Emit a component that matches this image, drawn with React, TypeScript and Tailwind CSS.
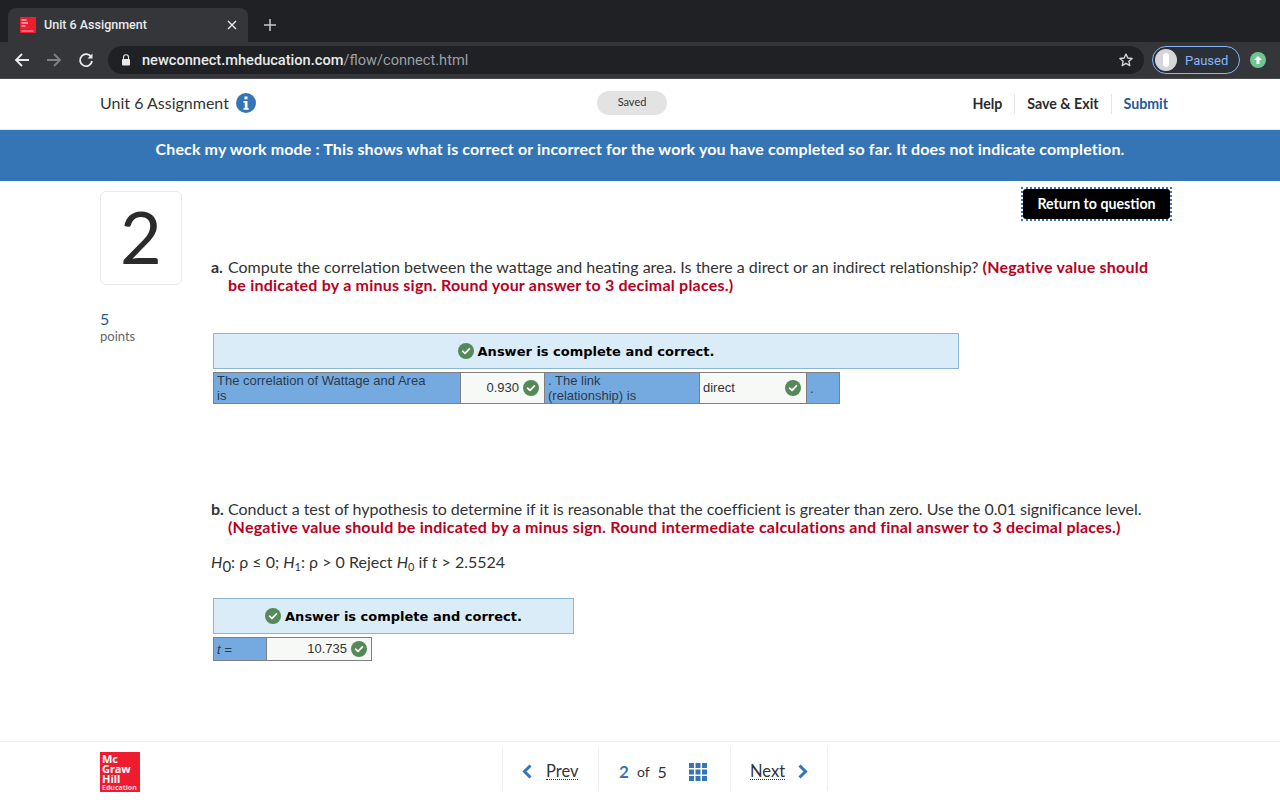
import React from "react";

const Check = ({ size = 16 }: { size?: number }) => (
  <svg width={size} height={size} viewBox="0 0 16 16" className="shrink-0">
    <circle cx="8" cy="8" r="8" fill="#55895a" />
    <path d="M4.6 8.2 7 10.4 11.4 5.9" fill="none" stroke="#fff" strokeWidth="1.7" strokeLinecap="round" strokeLinejoin="round" />
  </svg>
);

const Banner = ({ w }: { w: string }) => (
  <div className={`${w} h-9 bg-[#d9ecf8] border border-[#8db4d9] flex items-center justify-center gap-[4px] font-['DejaVu_Sans',sans-serif] font-bold text-[13px] text-black`}>
    <Check />
    <span className="pt-px">Answer is complete and correct.</span>
  </div>
);

const Blue = ({ w, children }: { w: string; children: React.ReactNode }) => (
  <div className={`${w} bg-[#75aae0] px-[3px] text-[13px] leading-[15px] text-[#2c3a4a] flex flex-col justify-center shrink-0`}>{children}</div>
);

export default function App() {
  return (
    <div className="w-[1280px] h-[800px] overflow-hidden flex flex-col bg-white font-['Lato',sans-serif] text-[#333]">
      {/* tab strip */}
      <div className="h-[42px] bg-[#202124] flex items-end pl-2 shrink-0">
        <div className="w-[240px] h-[34px] bg-[#35363a] rounded-t-lg flex items-center pl-3 pr-[10px] text-[#e8eaed]">
          <svg width="16" height="16" viewBox="0 0 16 16" className="mr-2 shrink-0">
            <rect width="16" height="16" fill="#ee1c2e" />
            <path d="M1.500 3h5M1.500 6h6.500M1.500 9h4" stroke="#fff" strokeWidth="1.200" />
            <path d="M1.500 14h12" stroke="#f8b8bf" strokeWidth="1" />
          </svg>
          <span className="flex-1 font-['Roboto',sans-serif] text-[12.5px] font-medium">Unit 6 Assignment</span>
          <svg width="10" height="10" viewBox="0 0 10 10" className="mr-[1px]"><path d="M1 1l8 8M9 1l-8 8" stroke="#e8eaed" strokeWidth="1.4" /></svg>
        </div>
        <svg width="14" height="14" viewBox="0 0 14 14" className="ml-[15px] mb-[10px]"><path d="M7 1v12M1 7h12" stroke="#c4c7cb" strokeWidth="1.5" /></svg>
      </div>
      {/* toolbar */}
      <div className="h-[37px] bg-[#35363a] flex items-center shrink-0 border-b border-[#4a4b4f]">
        <svg width="16" height="16" viewBox="0 0 16 16" className="ml-[14px]"><path d="M15 8H2M8 2 2 8l6 6" fill="none" stroke="#e8eaed" strokeWidth="1.8" /></svg>
        <svg width="16" height="16" viewBox="0 0 16 16" className="ml-[16px]"><path d="M1 8h13M8 2l6 6-6 6" fill="none" stroke="#7f8184" strokeWidth="1.8" /></svg>
        <svg width="16" height="16" viewBox="0 0 16 16" className="ml-[16px]"><path d="M13.300 5.200A6 6 0 1 0 14 9" fill="none" stroke="#e8eaed" strokeWidth="1.800" /><path d="M14.500 1.500v5h-5z" fill="#e8eaed" /></svg>
        <div className="ml-[14px] w-[1036px] h-7 rounded-full bg-[#202124] flex items-center pl-[13px] pr-[10px] text-[14.6px] font-['Roboto',sans-serif]">
          <svg width="10" height="12" viewBox="0 0 10 12" className="mr-[11px]"><path d="M2.500 5V3.300a2.500 2.500 0 0 1 5 0V5" fill="none" stroke="#e8eaed" strokeWidth="1.100" /><rect x="1" y="5" width="8" height="6.500" rx="1" fill="#e8eaed" /></svg>
          <span className="text-[#e8eaed] font-medium pt-px">newconnect.mheducation.com</span>
          <span className="text-[#9aa0a6] pt-px">/flow/connect.html</span>
          <svg width="16" height="16" viewBox="0 0 24 24" className="ml-auto"><path d="M12 3l2.700 6 6.500.7-4.900 4.300 1.400 6.400-5.700-3.300-5.700 3.300L7.700 14 2.800 9.700l6.500-.7z" fill="none" stroke="#d5d7da" strokeWidth="2" strokeLinejoin="round" /></svg>
        </div>
        <div className="ml-[8px] w-[88px] h-7 rounded-full border border-[#8ab4f8] bg-[#2b3037] flex items-center pl-[2px] text-[13px] text-[#8ab4f8] font-['Roboto',sans-serif]">
          <div className="w-[22px] h-[22px] rounded-full bg-[#d5d6d8] flex items-center justify-center"><div className="w-[6px] h-[14px] rounded-full bg-white" /></div>
          <span className="ml-2 pt-px">Paused</span>
        </div>
        <div className="ml-[10px] w-4 h-4 rounded-full bg-[#6fc58f] flex items-center justify-center">
          <svg width="10" height="10" viewBox="0 0 10 10"><path d="M5 1 9 5H6.500v4h-3V5H1z" fill="#fff" /></svg>
        </div>
      </div>
      {/* header */}
      <div className="h-[51px] flex items-center pl-[100px] pr-[112px] pb-[2px] shrink-0 border-b border-[#e8e8e8]">
        <div className="w-[497px] -mt-px flex items-center gap-[7px] text-[16px] text-[#333]">
          <span>Unit 6 Assignment</span>
          <svg width="20" height="20" viewBox="0 0 20 20"><circle cx="10" cy="10" r="10" fill="#3575b5" /><rect x="8.500" y="3.500" width="3" height="2.800" fill="#fff" /><path d="M7.500 8h4v7h1.200v1.700H7.500V15h1.300v-5.300H7.500z" fill="#fff" /></svg>
        </div>
        <div className="w-[70px] h-6 -mt-px rounded-full bg-[#e3e3e3] flex items-center justify-center text-[11px] text-[#333]">Saved</div>
        <div className="flex-1 mt-px flex justify-end items-center text-[14.2px] font-bold">
          <span className="pr-3 border-r border-[#e6e6e6] leading-5 text-[#2b2b2b]">Help</span>
          <span className="px-3 border-r border-[#e6e6e6] leading-5 text-[#2b2b2b]">Save &amp; Exit</span>
          <span className="pl-3 leading-5 text-[#1f5a96]">Submit</span>
        </div>
      </div>
      {/* mode banner */}
      <div className="h-[51px] bg-[#3575b5] flex justify-center pt-[7px] text-white font-bold text-[16px] tracking-[0.13px] shrink-0">
        Check my work mode : This shows what is correct or incorrect for the work you have completed so far. It does not indicate completion.
      </div>
      {/* main */}
      <div className="flex-1 flex pl-[100px] pr-[108px] pt-[10px] min-h-0">
        <div className="w-[111px] shrink-0">
          <div className="w-[82px] h-[94px] border border-[#eaeaea] rounded-md flex items-center justify-center pb-[4px] text-[72px] leading-none text-[#2b2b2b]">2</div>
          <div className="mt-[24px] text-[16px] leading-[20px] text-[#1f5a96]">5</div>
          <div className="text-[13px] leading-[15px] text-[#666]">points</div>
        </div>
        <div className="flex-1 text-[16px] leading-[18px]">
          <div className="flex justify-end">
            <div className="-mt-[4px] border-2 border-dotted border-[#3575b5]">
              <div className="w-[147px] h-[30px] bg-black rounded-[3px] text-white font-bold text-[14.2px] flex items-center justify-center">Return to question</div>
            </div>
          </div>
          <p className="mt-[37px] pl-[17px]">
            <b className="inline-block w-[17px] -ml-[17px]">a.</b>Compute the correlation between the wattage and heating area. Is there a direct or an indirect relationship? <b className="text-[#b8001f] tracking-[0.22px]">(Negative value should<br />be indicated by a minus sign. Round your answer to 3 decimal places.)</b>
          </p>
          <div className="mt-[39px] ml-[2px]">
            <Banner w="w-[746px]" />
            <div className="mt-[3px] w-[627px] h-[32px] flex border border-[#7f7f7f] font-['Liberation_Sans',sans-serif]">
              <Blue w="w-[246px]"><span>The correlation of Wattage and Area</span><span>is</span></Blue>
              <div className="w-[85px] shrink-0 border-x border-[#7f7f7f] bg-[#f7f9f6] flex items-center justify-end gap-[4px] pr-[5px] text-[13px] text-[#333]">0.930<Check /></div>
              <Blue w="w-[154px]"><span>. The link</span><span>(relationship) is</span></Blue>
              <div className="w-[108px] shrink-0 border-x border-[#7f7f7f] bg-[#f7f9f6] flex items-center justify-between pl-[3px] pr-[5px] text-[13px] text-[#333]">direct<Check /></div>
              <Blue w="flex-1"><span>.</span></Blue>
            </div>
          </div>
          <p className="mt-[96px] pl-[17px] tracking-[-0.03px]">
            <b className="inline-block w-[17px] -ml-[17px]">b.</b>Conduct a test of hypothesis to determine if it is reasonable that the coefficient is greater than zero. Use the 0.01 significance level. <b className="text-[#b8001f] tracking-[0.21px]">(Negative value should be indicated by a minus sign. Round intermediate calculations and final answer to 3 decimal places.)</b>
          </p>
          <p className="mt-[17px] h-[18px]">
            <i>H</i><sub className="text-[15px]">0</sub>: ρ ≤ 0; <i>H</i><sub className="text-[11px]">1</sub>: ρ &gt; 0 Reject <i>H</i><sub className="text-[11px]">0</sub> if <i>t</i> &gt; 2.5524
          </p>
          <div className="mt-[27px] ml-[2px]">
            <Banner w="w-[361px]" />
            <div className="mt-[3px] w-[159px] h-[24px] flex border border-[#7f7f7f] font-['Liberation_Sans',sans-serif]">
              <Blue w="w-[52px]"><i>t =</i></Blue>
              <div className="flex-1 border-l border-[#7f7f7f] bg-[#f7f9f6] flex items-center justify-end gap-[4px] pr-[4px] text-[13px] text-[#333]">10.735<Check /></div>
            </div>
          </div>
        </div>
      </div>
      {/* footer */}
      <div className="h-[59px] border-t border-[#f0f0f0] flex pl-[100px] shrink-0">
        <div className="w-10 h-10 mt-[10px] bg-[#ee1c2e] text-white font-bold text-[11px] leading-[10px] pl-[2px] pt-[2px] font-['Noto_Sans',sans-serif] shrink-0 overflow-hidden">
          Mc<br />Graw<br />Hill
          <div className="text-[7px] leading-[7px] text-[#fbd0d5]">Education</div>
        </div>
        <div className="ml-[362px] mt-[5px] h-[44px] flex items-center text-[16.5px] text-[#333] border-l border-[#eeeeee]">
          <div className="w-[96px] h-full flex items-center pl-[19px] pt-[5px] border-r border-[#eeeeee]">
            <svg width="11" height="15" viewBox="0 0 11 15"><path d="M8.500 1.500 2.500 7.500l6 6" fill="none" stroke="#3575b5" strokeWidth="3" /></svg>
            <span className="ml-[13px] border-b border-dotted border-[#333] leading-[16px]">Prev</span>
          </div>
          <div className="w-[132px] h-full flex items-center pl-[20px] pt-[5px] border-r border-[#eeeeee]">
            <b className="text-[#3575b5] text-[17px]">2</b>
            <span className="ml-2 text-[14px]">of</span>
            <span className="ml-2 text-[16px]">5</span>
            <svg width="18" height="18" viewBox="0 0 18 18" className="ml-[22px]" fill="#3575b5">
              <rect x="0" y="0" width="5" height="5" /><rect x="6.500" y="0" width="5" height="5" /><rect x="13" y="0" width="5" height="5" />
              <rect x="0" y="6.500" width="5" height="5" /><rect x="6.500" y="6.500" width="5" height="5" /><rect x="13" y="6.500" width="5" height="5" />
              <rect x="0" y="13" width="5" height="5" /><rect x="6.500" y="13" width="5" height="5" /><rect x="13" y="13" width="5" height="5" />
            </svg>
          </div>
          <div className="w-[97px] h-full flex items-center pl-[19px] pt-[5px] border-r border-[#eeeeee]">
            <span className="border-b border-dotted border-[#333] leading-[16px]">Next</span>
            <svg width="11" height="15" viewBox="0 0 11 15" className="ml-[12px]"><path d="M2.500 1.500l6 6-6 6" fill="none" stroke="#3575b5" strokeWidth="3" /></svg>
          </div>
        </div>
      </div>
    </div>
  );
}
